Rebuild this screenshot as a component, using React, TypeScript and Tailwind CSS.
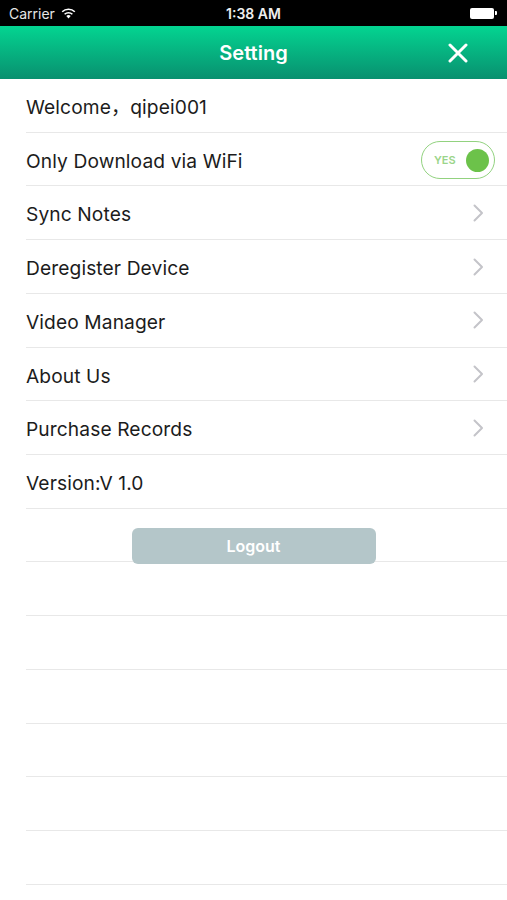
import React from "react";

const Chevron = () => (
  <svg width="11" height="18" viewBox="0 0 11 18" fill="none">
    <path d="M1.5 1.5 L9 9 L1.5 16.5" stroke="#c4c4c9" strokeWidth="2" strokeLinecap="round" strokeLinejoin="round" />
  </svg>
);

const Row = ({ children, right }: { children?: React.ReactNode; right?: React.ReactNode }) => (
  <div className="ml-[26px] h-[53.73px] border-b border-[#e8e8e8] flex items-center justify-between pr-[23px] box-border">
    <span className="mt-[4px] text-[19.2px] text-[#1c1c1c] tracking-[0.1px]">{children}</span>
    {right}
  </div>
);

export default function App() {
  const items = ["Sync Notes", "Deregister Device", "Video Manager", "About Us", "Purchase Records"];
  return (
    <div className="w-[507px] h-[900px] bg-white overflow-hidden" style={{ fontFamily: "Inter, 'Noto Sans CJK SC', sans-serif" }}>
      {/* status bar */}
      <div className="h-[26px] bg-black flex items-center justify-between px-[9px] relative text-white">
        <div className="flex items-center gap-[6px]">
          <span className="text-[14px] text-[#e6e6e6]">Carrier</span>
          <svg width="15" height="11" viewBox="0 0 15 11">
            <path d="M7.5 10.5 L5.3 8 A3.2 3.2 0 0 1 9.7 8 Z" fill="white" />
            <path d="M3.6 6.3 A5.6 5.6 0 0 1 11.4 6.3" stroke="white" strokeWidth="1.6" fill="none" />
            <path d="M1.2 3.8 A9 9 0 0 1 13.8 3.8" stroke="white" strokeWidth="1.6" fill="none" />
          </svg>
        </div>
        <span className="absolute left-1/2 -translate-x-1/2 text-[14px] font-semibold text-[#eeeeee]">1:38 AM</span>
        <div className="flex items-center mr-[1px]">
          <div className="w-[24px] h-[11px] bg-white rounded-[2px]" />
          <div className="w-[2px] h-[4px] bg-white rounded-r-[1px] ml-[1px]" />
        </div>
      </div>
      {/* nav bar */}
      <div className="h-[53px] bg-gradient-to-b from-[#03d591] to-[#08906f] flex items-center justify-center relative">
        <span className="text-white text-[20px] font-semibold">Setting</span>
        <svg className="absolute right-[39px] top-[17px]" width="20" height="20" viewBox="0 0 20 20">
          <path d="M2 2 L18 18 M18 2 L2 18" stroke="white" strokeWidth="3" strokeLinecap="round" />
        </svg>
      </div>
      {/* list */}
      <div className="flex flex-col">
        <Row>Welcome，qipei001</Row>
        <Row
          right={
            <div className="w-[74px] h-[38px] mt-[2px] rounded-full border-[1.5px] border-[#92d27f] flex items-center justify-between pl-[12px] pr-[5px] -mr-[11px]">
              <span className="text-[11px] font-semibold text-[#9bd58a]">YES</span>
              <div className="w-[23px] h-[23px] rounded-full bg-[#6cc24a]" />
            </div>
          }
        >
          Only Download via WiFi
        </Row>
        {items.map((t) => (
          <Row key={t} right={<Chevron />}>
            {t}
          </Row>
        ))}
        <Row>Version:V 1.0</Row>
        <div className="ml-[26px] h-[53.73px] border-b border-[#e8e8e8] flex items-end justify-center relative">
          <button className="relative z-10 -mb-[3px] -ml-[26px] w-[244px] h-[36px] rounded-[6px] bg-[#b4c6c9] text-white text-[16px] font-semibold">
            Logout
          </button>
        </div>
        {Array.from({ length: 6 }).map((_, i) => (
          <Row key={i} />
        ))}
      </div>
    </div>
  );
}
